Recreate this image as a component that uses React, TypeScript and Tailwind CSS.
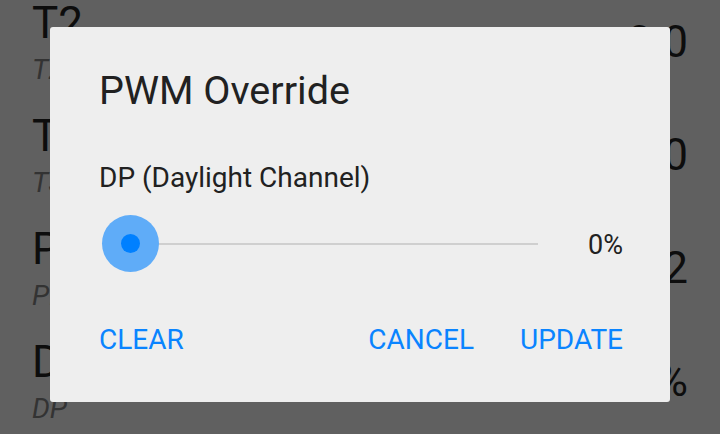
import React from "react";

const rows = [
  { title: "T2", sub: "T2", value: "0.0" },
  { title: "T3", sub: "T3", value: "0.0" },
  { title: "PH", sub: "PH", value: "0.2" },
  { title: "DP", sub: "DP", value: "0%" },
];

export default function App() {
  return (
    <div className="relative w-[720px] h-[434px] overflow-hidden bg-[#606060] font-['Roboto',sans-serif]">
      <div className="flex flex-col pt-[1px] pl-[32px] pr-[32px]">
        {rows.map((r) => (
          <div key={r.title} className="h-[113px] flex justify-between items-start">
            <div className="flex flex-col">
              <div className="text-[44px] leading-[44px] text-[#0d0d0d]">{r.title}</div>
              <div className="mt-[11px] text-[28px] leading-[28px] italic text-[#333333]">{r.sub}</div>
            </div>
            <div className="mt-[19px] text-[44px] leading-[44px] text-[#0d0d0d]">{r.value}</div>
          </div>
        ))}
      </div>

      <div className="absolute left-[50px] top-[27px] w-[620px] rounded-[3px] bg-[#eeeeee] pt-[44px] pb-[49px] pl-[49px] pr-[47px]">
        <div className="text-[39.5px] leading-[40px] text-[#212121]">PWM Override</div>
        <div className="mt-[53px] text-[28px] leading-[28px] text-[#212121]">DP (Daylight Channel)</div>
        <div className="mt-[23px] flex items-center h-[58px]">
          <div className="relative ml-[3px] flex-1 h-[58px]">
            <div className="absolute left-[28px] right-[28px] top-[28px] h-[2px] bg-[#cfcfcf]" />
            <div className="absolute left-0 top-0 w-[57px] h-[57px] rounded-full bg-[#5facf8] flex items-center justify-center">
              <div className="w-[19px] h-[19px] rounded-full bg-[#0080ff]" />
            </div>
          </div>
          <div className="w-[57px] pt-[3px] text-right text-[27px] leading-[27px] text-[#212121]">0%</div>
        </div>
        <div className="mt-[53px] flex items-center text-[28px] leading-[27px] text-[#0a84ff]">
          <div>CLEAR</div>
          <div className="flex-1" />
          <div>CANCEL</div>
          <div className="ml-[46px]">UPDATE</div>
        </div>
      </div>
    </div>
  );
}
